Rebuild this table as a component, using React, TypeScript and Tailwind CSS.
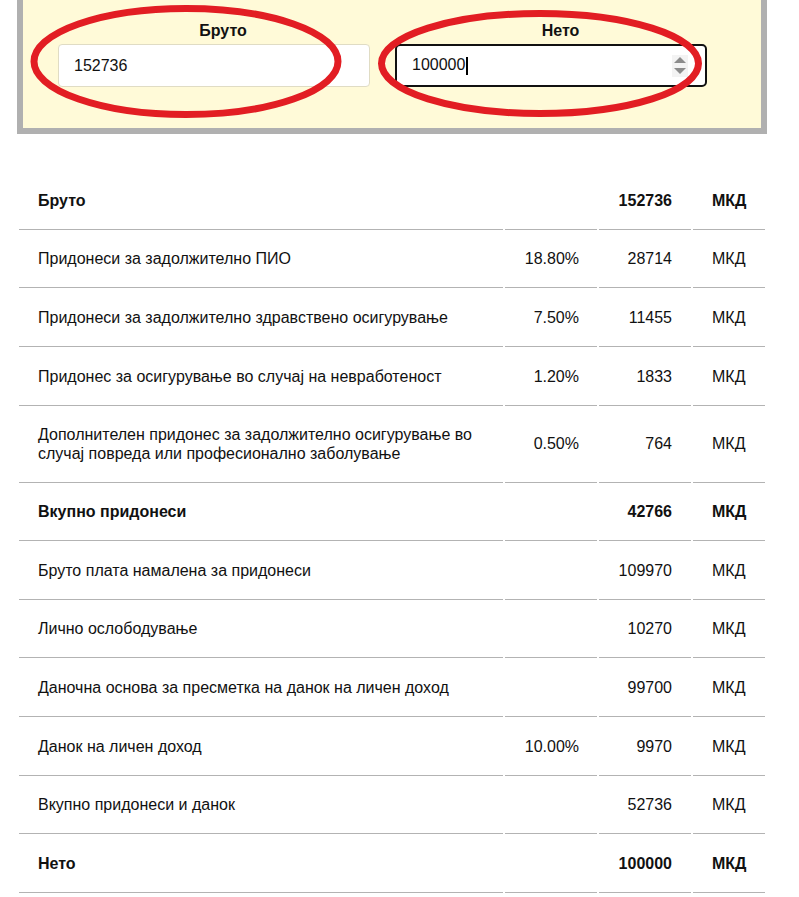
import React from "react";

type Row = {
  label: React.ReactNode;
  pct?: string;
  value: string;
  bold?: boolean;
};

const rows: Row[] = [
  { label: "Бруто", value: "152736", bold: true },
  { label: "Придонеси за задолжително ПИО", pct: "18.80%", value: "28714" },
  { label: "Придонеси за задолжително здравствено осигурување", pct: "7.50%", value: "11455" },
  { label: "Придонес за осигурување во случај на невработеност", pct: "1.20%", value: "1833" },
  {
    label: (
      <>
        Дополнителен придонес за задолжително осигурување во
        <br />
        случај повреда или професионално заболување
      </>
    ),
    pct: "0.50%",
    value: "764",
  },
  { label: "Вкупно придонеси", value: "42766", bold: true },
  { label: "Бруто плата намалена за придонеси", value: "109970" },
  { label: "Лично ослободување", value: "10270" },
  { label: "Даночна основа за пресметка на данок на личен доход", value: "99700" },
  { label: "Данок на личен доход", pct: "10.00%", value: "9970" },
  { label: "Вкупно придонеси и данок", value: "52736" },
  { label: "Нето", value: "100000", bold: true },
];

export default function App() {
  return (
    <div className="relative w-[799px] h-[897px] overflow-hidden bg-white font-['Liberation_Sans',Arial,sans-serif] text-[16px] leading-[18.4px] text-[#111]">
      {/* Form panel */}
      <div className="ml-[17px] -mt-[10px] w-[750px] border-[6px] border-[#b0b0b0] bg-[#fffad8] pt-[25.8px] pb-[41px] pl-[35px]">
        <div className="flex gap-[25px]">
          <div className="flex w-[312px] flex-col">
            <div className="pl-[18px] text-center font-bold">Бруто</div>
            <input
              readOnly
              value="152736"
              className="mt-[3.8px] h-[43px] w-[312px] rounded-[4px] border border-[#e0dcc4] bg-white px-[15px] text-[16px] text-[#111] outline-none"
            />
          </div>
          <div className="flex w-[312px] flex-col">
            <div className="pl-[19px] text-center font-bold">Нето</div>
            <div className="mt-[3.8px] flex h-[43px] w-[312px] items-center rounded-[5px] border-2 border-[#111] bg-white pl-[15px] pr-[17px]">
              <span className="text-[16px]">100000</span>
              <span className="ml-[0.5px] h-[18px] w-[2px] bg-black" />
              <div className="ml-auto flex h-[22px] w-[16px] flex-col items-center justify-center gap-[5px] bg-[#f3f3f3]">
                <svg width="12" height="6" viewBox="0 0 12 6">
                  <path d="M6 0 L12 6 L0 6 Z" fill="#8c8c8c" />
                </svg>
                <svg width="12" height="6" viewBox="0 0 12 6">
                  <path d="M0 0 L12 0 L6 6 Z" fill="#8c8c8c" />
                </svg>
              </div>
            </div>
          </div>
        </div>
      </div>

      {/* Result table */}
      <div className="ml-[19px] mt-[39.3px] grid grid-cols-[484px_92px_92px_72px] gap-x-[2px] gap-y-[2px]">
        {rows.map((r, i) => (
          <React.Fragment key={i}>
            <div
              className={`flex items-center border-b border-[#b3b3b3] py-[18.6px] pl-[19px] pr-[10px] ${r.bold ? "font-bold" : ""}`}
            >
              <span>{r.label}</span>
            </div>
            <div className="flex items-center justify-end border-b border-[#b3b3b3] py-[18.6px] pr-[18px]">
              {r.pct ?? ""}
            </div>
            <div
              className={`flex items-center justify-end border-b border-[#b3b3b3] py-[18.6px] pr-[19px] ${r.bold ? "font-bold" : ""}`}
            >
              {r.value}
            </div>
            <div
              className={`flex items-center border-b border-[#b3b3b3] py-[18.6px] pl-[19px] ${r.bold ? "font-bold" : ""}`}
            >
              МКД
            </div>
          </React.Fragment>
        ))}
      </div>

      {/* Red annotation ellipses */}
      <svg
        className="pointer-events-none absolute left-0 top-0"
        width="799"
        height="140"
        viewBox="0 0 799 140"
      >
        <ellipse cx="186" cy="61.5" rx="152" ry="53" fill="none" stroke="#e21d23" strokeWidth="7" />
        <ellipse cx="540" cy="63.5" rx="158.5" ry="50" fill="none" stroke="#e21d23" strokeWidth="7" />
      </svg>
    </div>
  );
}
